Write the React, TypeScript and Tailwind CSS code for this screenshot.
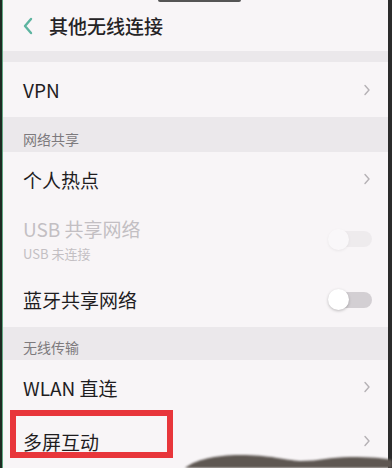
import React from 'react';

const font = { fontFamily: '"Noto Sans CJK SC", "Noto Sans", sans-serif' };

const Chevron = () => (
  <svg width="8" height="12" viewBox="0 0 8 12" className="shrink-0">
    <path d="M2 1.5 L6 6 L2 10.5" fill="none" stroke="#b5b1b5" strokeWidth="1.4" strokeLinecap="round" strokeLinejoin="round" />
  </svg>
);

const Toggle = ({ faded }: { faded?: boolean }) => (
  <div className={`relative w-[44px] h-[20px] flex items-center ${faded ? 'opacity-25' : ''}`}>
    <div className="absolute left-[6px] right-0 h-[16px] rounded-full bg-[#d3cfd3]" />
    <div className="absolute left-0 w-[21px] h-[21px] rounded-full bg-white shadow-[0_1px_3px_rgba(0,0,0,0.25)]" />
  </div>
);

const Row = ({ title, h, right }: { title: string; h: string; right?: React.ReactNode }) => (
  <div className={`flex items-center justify-between pl-[20px] pr-[17px] ${h}`}>
    <span className="text-[19px] text-[#1f1d1f] leading-none">{title}</span>
    {right ?? <Chevron />}
  </div>
);

const Section = ({ title, h }: { title: string; h: string }) => (
  <div className={`flex items-end pl-[20px] pb-[6px] bg-[#ebe8eb] ${h}`}>
    <span className="text-[14px] text-[#7d7a7d] leading-none">{title}</span>
  </div>
);

export default function App() {
  return (
    <div className="relative w-[392px] h-[468px] overflow-hidden bg-[#2a2a2a]" style={font}>
      <div className="flex h-full">
        <div className="w-[2px] bg-[#1e2a22]" />
        <div className="w-[1px] bg-[#5fa683]" />
        <div className="flex-1 flex flex-col bg-[#f8f5f7]">
          {/* header */}
          <div className="h-[51px] flex items-center pl-[19px] gap-[15px]">
            <svg width="12" height="18" viewBox="0 0 12 18">
              <path d="M9 2 L3 9 L9 16" fill="none" stroke="#5db4a0" strokeWidth="2.4" strokeLinecap="round" strokeLinejoin="round" />
            </svg>
            <span className="text-[19px] font-medium text-[#252325] leading-none">其他无线连接</span>
          </div>
          <div className="h-[11px] bg-[#ebe8eb]" />
          <Row title="VPN" h="h-[55px]" />
          <Section title="网络共享" h="h-[35px]" />
          <Row title="个人热点" h="h-[54px]" />
          <div className="h-[66px] flex items-center justify-between pl-[20px] pr-[16px]">
            <div className="flex flex-col gap-[9px]">
              <span className="text-[19px] text-[#c3bfc3] leading-none">USB 共享网络</span>
              <span className="text-[13px] text-[#c3bfc3] leading-none">USB 未连接</span>
            </div>
            <Toggle faded />
          </div>
          <Row title="蓝牙共享网络" h="h-[55px]" right={<div className="mr-[-1px]"><Toggle /></div>} />
          <Section title="无线传输" h="h-[33px]" />
          <Row title="WLAN 直连" h="h-[54px]" />
          <Row title="多屏互动" h="h-[54px]" />
        </div>
        <div className="w-[4px] bg-[#2b2b2b]" />
      </div>

      {/* notch at top */}
      <div className="absolute left-[158px] top-0 w-[83px] h-[2px] rounded-b bg-[#555]" />

      {/* red highlight box */}
      <div className="absolute left-[10px] top-[410px] w-[163px] h-[48px] border-[6px] border-[#e8363b]" />

      {/* dark object at bottom */}
      <svg className="absolute left-0 bottom-0 blur-[1px]" width="392" height="20" viewBox="0 0 392 20">
        <path d="M185 20 C195 12 215 7 240 7 C270 7 285 12 300 13 C320 13 330 9 350 9 C370 9 385 10 392 12 L392 20 Z" fill="#5e5752" />
      </svg>
    </div>
  );
}
